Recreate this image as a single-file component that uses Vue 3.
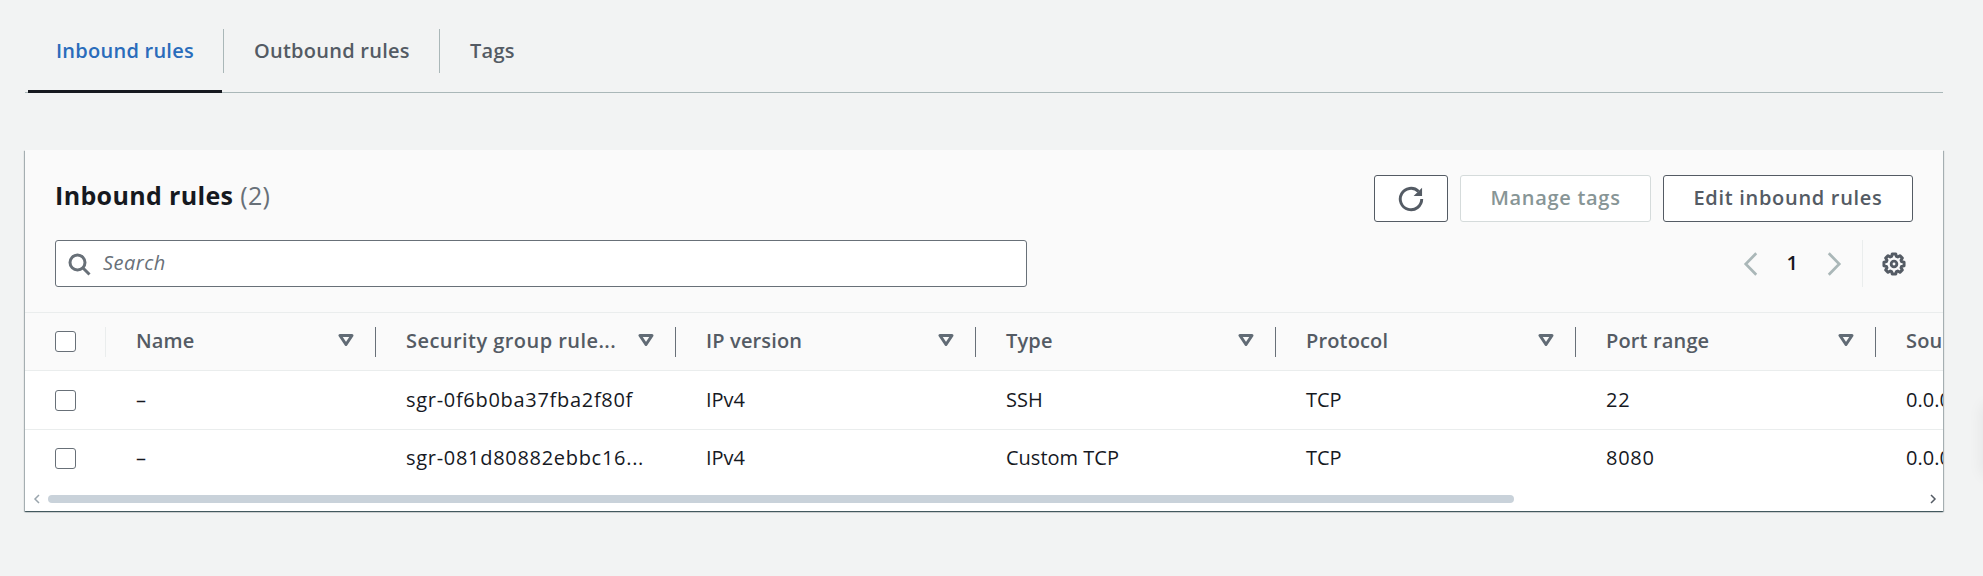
<template>
  <div class="page">
    <div class="tabs">
      <div v-for="(tab, i) in tabs" :key="tab" class="tab" :class="{ active: i === 0 }">
        <span>{{ tab }}</span>
      </div>
    </div>

    <div class="card">
      <div class="card-head">
        <div class="head-row">
          <h2>Inbound rules <span class="count">(2)</span></h2>
          <div class="actions">
            <button class="btn icon-btn">
              <svg width="26" height="26" viewBox="0 0 16 16">
                <path d="M14.6 8a6.6 6.6 0 1 1-2-4.7" fill="none" stroke="#545b64" stroke-width="1.8" />
                <path d="M14.8 1v5.2H9.6z" fill="#545b64" />
              </svg>
            </button>
            <button class="btn manage" disabled><span>Manage tags</span></button>
            <button class="btn edit"><span>Edit inbound rules</span></button>
          </div>
        </div>
        <div class="tools-row">
          <div class="search">
            <svg width="24" height="24" viewBox="0 0 16 16">
              <circle cx="7" cy="7" r="5" fill="none" stroke="#687078" stroke-width="2" />
              <path d="M10.5 10.5 15 15" fill="none" stroke="#687078" stroke-width="2" />
            </svg>
            <span class="placeholder">Search</span>
          </div>
          <div class="pager">
            <svg width="24" height="24" viewBox="0 0 16 16">
              <path d="M11.5.8 4.5 8l7 7.2" fill="none" stroke="#aab7b8" stroke-width="1.8" />
            </svg>
            <span class="page-num">1</span>
            <svg width="24" height="24" viewBox="0 0 16 16">
              <path d="m4.5.8 7 7.2-7 7.2" fill="none" stroke="#aab7b8" stroke-width="1.8" />
            </svg>
          </div>
          <div class="prefs">
            <svg width="24" height="24" viewBox="0 0 16 16">
              <path :d="gearPath" fill="none" stroke="#545b64" stroke-width="2" stroke-linejoin="round" />
              <circle cx="8" cy="8" r="1.9" fill="none" stroke="#545b64" stroke-width="1.9" />
            </svg>
          </div>
        </div>
      </div>

      <div class="table">
        <div class="row header">
          <div class="cell sel"><i class="check"></i></div>
          <div v-for="col in columns" :key="col" class="cell">
            <span class="text">{{ col }}</span>
            <svg class="caret" width="16" height="12" viewBox="0 0 16 12">
              <path d="M2 1.5h12L8 10.5z" fill="none" stroke="#616b75" stroke-width="3" stroke-linejoin="round" />
            </svg>
          </div>
        </div>
        <div v-for="row in rows" :key="row[1]" class="row body">
          <div class="cell sel"><i class="check"></i></div>
          <div v-for="(val, i) in row" :key="i" class="cell">
            <span class="text">{{ val }}</span>
          </div>
        </div>
      </div>

      <div class="scroll">
        <svg width="8" height="10" viewBox="0 0 8 10"><path d="M6 1 2 5l4 4" fill="none" stroke="#9aa5ad" stroke-width="1.5" /></svg>
        <div class="track"><div class="thumb"></div></div>
        <svg width="8" height="10" viewBox="0 0 8 10"><path d="m2 1 4 4-4 4" fill="none" stroke="#545b64" stroke-width="1.5" /></svg>
      </div>
    </div>
    <div class="edge-shadow"></div>
  </div>
</template>

<script setup>
const tabs = ['Inbound rules', 'Outbound rules', 'Tags']

const columns = ['Name', 'Security group rule...', 'IP version', 'Type', 'Protocol', 'Port range', 'Source']

const rows = [
  ['–', 'sgr-0f6b0ba37fba2f80f', 'IPv4', 'SSH', 'TCP', '22', '0.0.0.0/0'],
  ['–', 'sgr-081d80882ebbc16...', 'IPv4', 'Custom TCP', 'TCP', '8080', '0.0.0.0/0']
]

// 8 toothed gear outline
const gearPath = (() => {
  const pts = []
  for (let i = 0; i < 8; i++) {
    const a = (i * Math.PI) / 4
    for (const [r, d] of [[5.3, -0.3], [6.8, -0.17], [6.8, 0.17], [5.3, 0.3]]) {
      pts.push(`${(8 + r * Math.sin(a + d)).toFixed(2)} ${(8 - r * Math.cos(a + d)).toFixed(2)}`)
    }
  }
  return 'M' + pts.join('L') + 'Z'
})()
</script>

<style>
html,
body {
  margin: 0;
  background: #f2f3f3;
}
</style>

<style scoped>
.page {
  position: relative;
  height: 576px;
  padding: 0 40px 0 25px;
  box-sizing: border-box;
  overflow: hidden;
  font-family: "Open Sans", "Liberation Sans", sans-serif;
  font-size: 20px;
  color: #16191f;
}

.tabs {
  display: flex;
  height: 92px;
  border-bottom: 1px solid #aab7b8;
}

.tab {
  position: relative;
  display: flex;
  align-items: center;
  padding: 8px 0 0 31px;
  font-weight: 600;
  letter-spacing: 0.25px;
  color: #545b64;
  white-space: nowrap;
}

.tab:nth-child(1) {
  width: 198px;
  box-sizing: border-box;
}

.tab:nth-child(2) {
  width: 216px;
  box-sizing: border-box;
}

.tab + .tab::before {
  content: "";
  position: absolute;
  left: 0;
  top: 29px;
  height: 44px;
  width: 1px;
  background: #aab7b8;
}

.tab.active {
  color: #2a6cbb;
}

.tab.active::after {
  content: "";
  position: absolute;
  left: 3px;
  right: 1px;
  bottom: -1px;
  height: 3px;
  background: #16191f;
}

.card {
  margin-top: 57px;
  background: #fff;
  box-shadow: 0 1px 1px 0 rgba(0, 28, 36, 0.5), 1px 1px 1px 0 rgba(0, 28, 36, 0.25), -1px 1px 1px 0 rgba(0, 28, 36, 0.25);
  overflow: hidden;
}

.card-head {
  background: #fafafa;
  padding: 25px 30px 25px 30px;
  border-bottom: 1px solid #eaeded;
}

.head-row {
  display: flex;
  justify-content: space-between;
  align-items: center;
  height: 47px;
}

h2 {
  margin: -7px 0 0 0;
  font-size: 25px;
  font-weight: 700;
  line-height: 40px;
  letter-spacing: 0.35px;
}

.count {
  font-weight: 400;
  color: #687078;
}

.actions {
  display: flex;
  gap: 12px;
}

.btn {
  height: 47px;
  box-sizing: border-box;
  background: #fff;
  border: 1px solid #545b64;
  border-radius: 3px;
  font: inherit;
  font-weight: 600;
  letter-spacing: 0.7px;
  color: #545b64;
  padding: 0 0 3px;
  display: flex;
  align-items: center;
  justify-content: center;
}

.icon-btn {
  width: 74px;
  padding: 0;
}

.manage {
  width: 191px;
  border-color: #d5dbdb;
  color: #879596;
}

.edit {
  width: 250px;
}

.tools-row {
  display: flex;
  align-items: center;
  margin-top: 18px;
}

.search {
  width: 972px;
  height: 47px;
  box-sizing: border-box;
  background: #fff;
  border: 1px solid #687078;
  border-radius: 3px;
  display: flex;
  align-items: center;
  gap: 12px;
  padding-left: 11px;
  font-style: italic;
  letter-spacing: 0.5px;
  color: #687078;
}

.placeholder {
  margin-top: -2px;
}

.pager {
  margin-left: auto;
  display: flex;
  align-items: center;
  gap: 24px;
}

.page-num {
  font-weight: 600;
  margin-top: -2px;
}

.prefs {
  margin-left: 16px;
  height: 47px;
  display: flex;
  align-items: center;
  padding: 0 7px 0 19px;
  border-left: 1px solid #eaeded;
}

.table {
  overflow: hidden;
}

.row {
  display: grid;
  grid-template-columns: 81px 270px repeat(6, 300px);
  width: max-content;
  align-items: center;
  box-sizing: border-box;
}

.header {
  height: 58px;
  background: #fafafa;
  border-bottom: 1px solid #eaeded;
}

.body {
  height: 58px;
}

.body + .body {
  border-top: 1px solid #eaeded;
}

.cell {
  position: relative;
  display: flex;
  align-items: center;
  justify-content: space-between;
  box-sizing: border-box;
  padding: 0 21px 0 30px;
  min-width: 0;
}

.header .cell {
  height: 30px;
  font-weight: 600;
  letter-spacing: 0.15px;
  color: #545b64;
  border-right: 1px solid #687078;
}

.header .sel {
  border-right-color: #eaeded;
}

.header .cell:nth-child(3) .text {
  letter-spacing: 0.45px;
}

.body .cell:nth-child(3) .text,
.body .cell:nth-child(7) .text {
  letter-spacing: 0.7px;
}

.text {
  white-space: nowrap;
  margin-top: -2px;
}

.caret {
  flex: none;
  margin-top: -3px;
}

.sel {
  padding: 0 0 0 30px;
}

.check {
  display: block;
  width: 21px;
  height: 21px;
  box-sizing: border-box;
  background: #fff;
  border: 1.5px solid #687078;
  border-radius: 3px;
}

.scroll {
  display: flex;
  align-items: center;
  gap: 7px;
  height: 24px;
  padding: 0 6px 0 8px;
}

.track {
  flex: 1;
}

.thumb {
  width: 1466px;
  height: 8px;
  border-radius: 4px;
  background: #c9d2da;
}

.edge-shadow {
  position: absolute;
  right: -20px;
  top: 405px;
  width: 20px;
  height: 70px;
  box-shadow: 0 0 16px rgba(0, 28, 36, 0.07);
}
</style>
